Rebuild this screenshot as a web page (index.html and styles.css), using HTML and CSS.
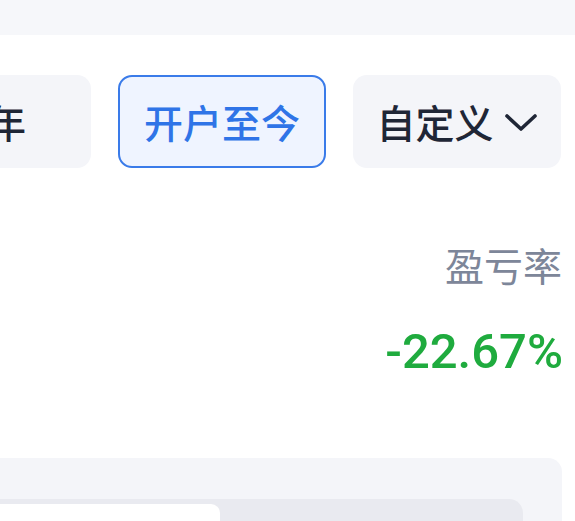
FILE: index.html
```html
<!DOCTYPE html>
<html lang="zh-CN">
<head>
<meta charset="utf-8">
<link rel="stylesheet" href="styles.css">
</head>
<body>
<div class="topband"></div>
<main class="content">
  <div class="ranges">
    <div class="range">今年</div>
    <div class="range active">开户至今</div>
    <div class="range custom">自定义<svg class="chev" width="34" height="20" viewBox="0 0 34 20"><path d="M3 3 L17 16 L31 3" fill="none" stroke="#1f2636" stroke-width="3.6" stroke-linecap="round" stroke-linejoin="round"/></svg></div>
  </div>
  <div class="stat">
    <div class="stat-label">盈亏率</div>
    <div class="stat-value">-22.67%</div>
  </div>
  <section class="card">
    <div class="tabs">
      <div class="tab selected"></div>
    </div>
  </section>
</main>
</body>
</html>
```
FILE: styles.css
```css
html, body {
  margin: 0;
  padding: 0;
  background: #ffffff;
  overflow: hidden;
}
body {
  width: 575px;
  height: 521px;
  font-family: "Noto Sans CJK SC", "Noto Sans", sans-serif;
}
.topband {
  height: 35px;
  background: #f6f7fa;
}
.content {
  padding-right: 13px;
  margin-left: -117px;
}
.ranges {
  display: flex;
  gap: 27px;
  margin-top: 40px;
}
.range {
  box-sizing: border-box;
  width: 208px;
  height: 93px;
  flex: none;
  border-radius: 14px;
  background: #f4f5f9;
  color: #1f2636;
  font-size: 39px;
  font-weight: 500;
  display: flex;
  align-items: center;
  justify-content: center;
  line-height: 1;
}
.range.active {
  border: 2.5px solid #3a7be9;
  background: #eff4ff;
  color: #2f74e7;
}
.range.custom {
  gap: 10px;
}
.chev {
  margin-top: 2px;
}
.stat {
  margin-top: 72px;
  display: flex;
  flex-direction: column;
  align-items: flex-end;
}
.stat-label {
  color: #7d8699;
  font-size: 39px;
  font-weight: 400;
  line-height: 48px;
}
.stat-value {
  margin-top: 40px;
  color: #1fab3e;
  font-family: Roboto, "Noto Sans", sans-serif;
  font-size: 49px;
  font-weight: 500;
  line-height: 48px;
  margin-right: -1px;
}
.card {
  margin-top: 82px;
  height: 200px;
  background: #f4f5f9;
  border-radius: 14px;
  padding: 41px 39px 0 0;
}
.tabs {
  height: 120px;
  background: #e9eaf0;
  border-radius: 14px;
  padding-top: 5px;
}
.tab.selected {
  width: 337px;
  height: 100px;
  background: #ffffff;
  border-radius: 9px;
}
```
